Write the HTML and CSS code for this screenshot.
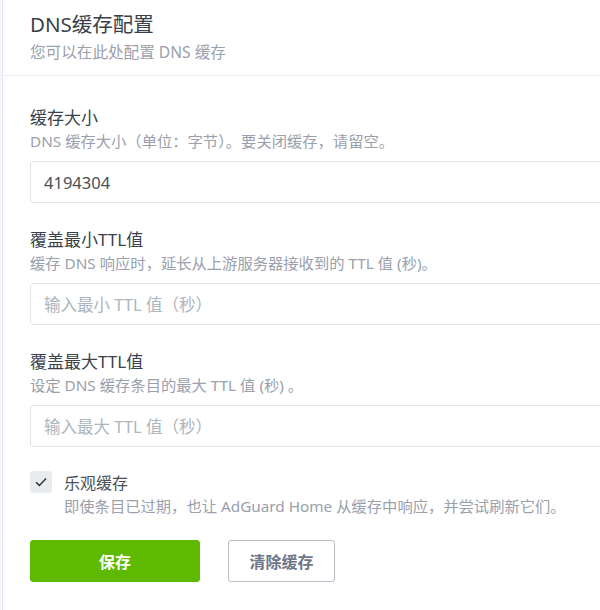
FILE: index.html
```html
<!DOCTYPE html>
<html lang="zh-CN">
<head>
<meta charset="utf-8">
<link rel="stylesheet" href="styles.css">
</head>
<body>
<div class="card">
  <div class="card-header">
    <div class="card-title">DNS缓存配置</div>
    <div class="card-subtitle">您可以在此处配置 DNS 缓存</div>
  </div>
  <div class="card-body">
    <div class="field">
      <div class="label">缓存大小</div>
      <div class="desc">DNS 缓存大小（单位：字节）。要关闭缓存，请留空。</div>
      <input class="input" type="text" value="4194304">
    </div>
    <div class="field">
      <div class="label">覆盖最小TTL值</div>
      <div class="desc">缓存 DNS 响应时，延长从上游服务器接收到的 TTL 值 (秒)。</div>
      <input class="input" type="text" placeholder="输入最小 TTL 值（秒）">
    </div>
    <div class="field">
      <div class="label">覆盖最大TTL值</div>
      <div class="desc">设定 DNS 缓存条目的最大 TTL 值 (秒) 。</div>
      <input class="input" type="text" placeholder="输入最大 TTL 值（秒）">
    </div>
    <div class="check-row">
      <span class="checkbox">
        <svg width="14" height="14" viewBox="0 0 14 14"><path d="M2 7.2 L5.4 10.4 L12 3.6" fill="none" stroke="#2d333c" stroke-width="1.5"/></svg>
      </span>
      <div class="check-text">
        <div class="check-label">乐观缓存</div>
        <div class="desc">即使条目已过期，也让 AdGuard Home 从缓存中响应，并尝试刷新它们。</div>
      </div>
    </div>
    <div class="actions">
      <button class="btn btn-success">保存</button>
      <button class="btn btn-outline">清除缓存</button>
    </div>
  </div>
</div>
</body>
</html>
```

FILE: styles.css
```css
html, body {
  margin: 0;
  padding: 0;
  background: #f5f7fb;
  overflow: hidden;
  width: 600px;
  height: 610px;
}
body {
  font-family: "Noto Sans", "Noto Sans CJK SC", sans-serif;
  color: #495057;
}
.card {
  margin-left: 2px;
  width: 680px;
  min-height: 620px;
  background: #fff;
  border-left: 1px solid #e3e6ee;
}
.card-header {
  padding: 10px 27px 12px;
  border-bottom: 1px solid #e9ecf2;
}
.card-title {
  font-size: 20.5px;
  line-height: 28px;
  color: #3a414b;
}
.card-subtitle {
  margin-top: 3px;
  font-size: 15.6px;
  line-height: 22px;
  color: #9aa0ac;
}
.card-body {
  padding: 29px 27px 0;
}
.field {
  margin-bottom: 24px;
}
.label {
  font-size: 17px;
  line-height: 25px;
  color: #3a414b;
}
.desc {
  font-size: 15.3px;
  line-height: 22px;
  color: #9aa0ac;
}
.input {
  display: block;
  box-sizing: border-box;
  width: 100%;
  height: 42px;
  margin-top: 9px;
  padding: 0 13px;
  border: 1px solid #e0e5ec;
  border-radius: 3px;
  font-family: "Noto Sans", "Noto Sans CJK SC", sans-serif;
  font-size: 16.5px;
  color: #495057;
  background: #fff;
  outline: none;
}
.input::placeholder {
  color: #adb5bd;
}
.check-row {
  display: flex;
  gap: 12px;
  align-items: flex-start;
}
.checkbox {
  flex: none;
  width: 22px;
  height: 22px;
  margin-top: 0;
  border-radius: 3px;
  background: #e9ecef;
  display: flex;
  align-items: center;
  justify-content: center;
}
.check-label {
  font-size: 16px;
  line-height: 24px;
  color: #495057;
}
.actions {
  display: flex;
  gap: 28px;
  margin-top: 23px;
}
.btn {
  height: 42px;
  border-radius: 3px;
  font-family: "Noto Sans", "Noto Sans CJK SC", sans-serif;
  font-size: 16px;
  font-weight: 700;
  cursor: pointer;
}
.btn-success {
  width: 170px;
  background: #5eba00;
  border: 1px solid #5eba00;
  color: #fff;
}
.btn-outline {
  width: 107px;
  background: #fff;
  border: 1px solid #b8bdc5;
  color: #6e7687;
}
```
